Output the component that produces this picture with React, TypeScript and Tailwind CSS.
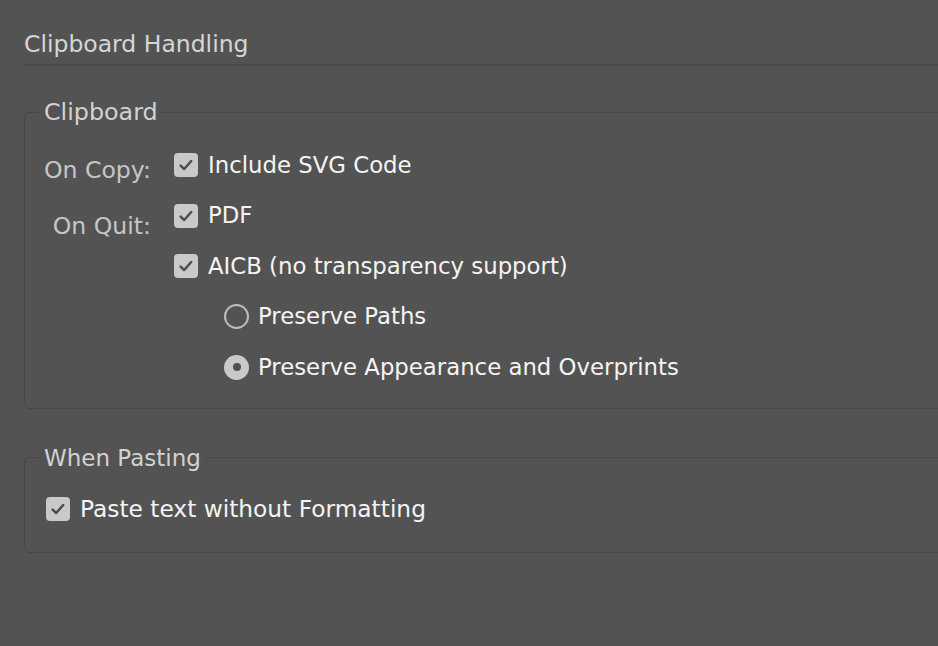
import React from 'react';

function CheckBox() {
    return (
        <span className="flex h-6 w-6 shrink-0 items-center justify-center rounded-[4px] bg-[#c9c9c9]">
            <svg width="18" height="18" viewBox="0 0 18 18" fill="none">
                <path d="M3.6 9.6 L7.2 13 L14.2 5" stroke="#4e4e4e" strokeWidth="2.5" strokeLinecap="round" strokeLinejoin="round" />
            </svg>
        </span>
    );
}

function Radio({ checked }: { checked?: boolean }) {
    if (checked) {
        return (
            <span className="flex h-[25px] w-[25px] shrink-0 items-center justify-center rounded-full bg-[#c9c9c9]">
                <span className="h-2 w-2 rounded-full bg-[#505050]" />
            </span>
        );
    }
    return <span className="h-[25px] w-[25px] shrink-0 rounded-full border-2 border-[#bdbdbd]" />;
}

function Option({ children, radio, checked, size = 'text-[22.8px]' }: { children: React.ReactNode; radio?: boolean; checked?: boolean; size?: string }) {
    return (
        <div className={`flex h-[50.5px] items-center ${radio ? 'gap-[9px]' : 'gap-[10px]'}`}>
            {radio ? <Radio checked={checked} /> : <CheckBox />}
            <span className={`${size} leading-none text-[#f4f4f4]`}>{children}</span>
        </div>
    );
}

export default function App() {
    return (
        <div className="h-[646px] w-full overflow-hidden bg-[#535353] font-['DejaVu_Sans',sans-serif]">
            <div className="pl-6 pt-[29px]">
                {/* Section title */}
                <div className="text-[23.5px] leading-[30px] text-[#d6d6d6]">Clipboard Handling</div>
                <div className="mt-[5px] mr-[-20px] h-[2px] bg-[#4a4a4a]" />

                {/* Clipboard group */}
                <fieldset className="mt-[32px] mr-[-20px] rounded-[5px] border border-[#474747] pb-[15px]">
                    <legend className="ml-[15px] px-[4px] text-[23.8px] leading-[28px] text-[#d2d2d2]">Clipboard</legend>
                    <div className="grid grid-cols-[126px_1fr] gap-x-[23px] pt-[14px]">
                        <div className="flex flex-col items-end text-[23.6px] leading-none text-[#c6c6c6]">
                            <div className="flex h-[50.5px] items-center pt-[11px]">On Copy:</div>
                            <div className="flex h-[50.5px] items-center pt-[22px]">On Quit:</div>
                        </div>
                        <div>
                            <Option>Include SVG Code</Option>
                            <Option>PDF</Option>
                            <Option>AICB (no transparency support)</Option>
                            <div className="pl-[50px]">
                                <Option radio>Preserve Paths</Option>
                                <Option radio checked>Preserve Appearance and Overprints</Option>
                            </div>
                        </div>
                    </div>
                </fieldset>

                {/* When Pasting group */}
                <fieldset className="mt-[35px] mr-[-20px] rounded-[5px] border border-[#474747] pb-[18px]">
                    <legend className="ml-[15px] px-[4px] text-[23px] leading-[28px] text-[#d2d2d2]">When Pasting</legend>
                    <div className="pl-[21px] pt-[12px]">
                        <Option size="text-[23.3px]">Paste text without Formatting</Option>
                    </div>
                </fieldset>
            </div>
        </div>
    );
}
